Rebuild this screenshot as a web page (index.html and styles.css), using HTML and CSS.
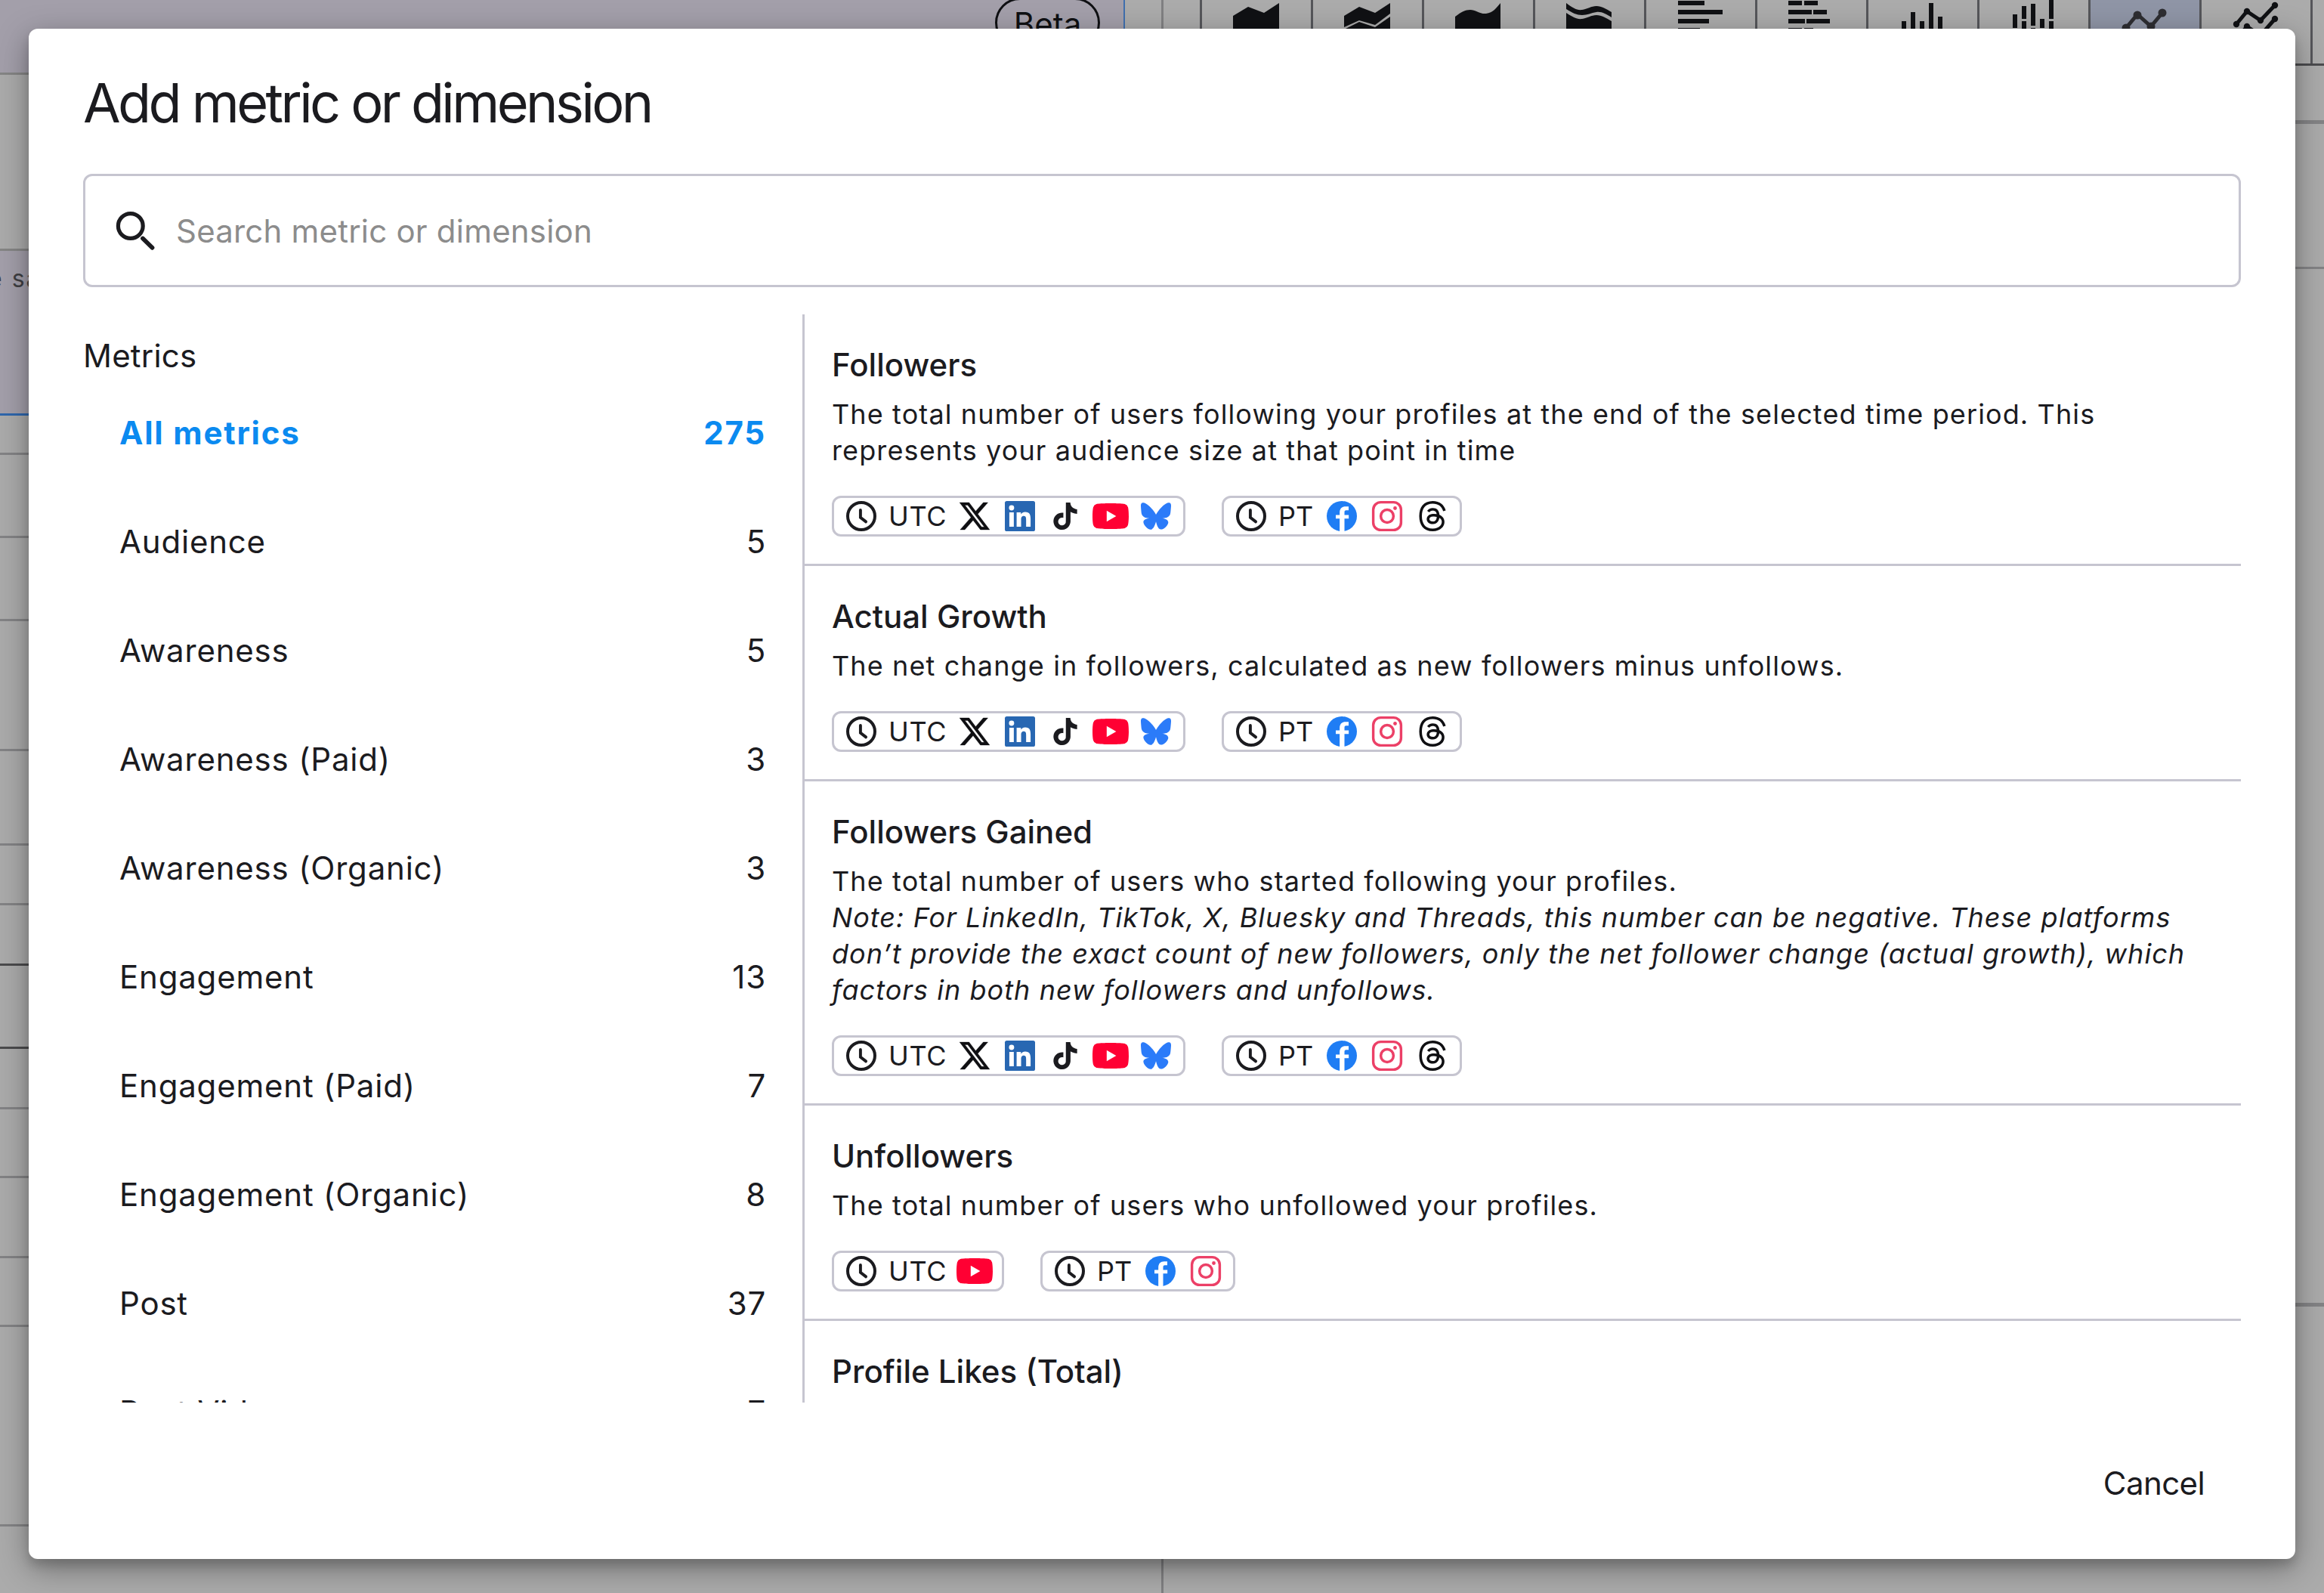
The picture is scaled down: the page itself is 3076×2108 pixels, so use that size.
FILE: index.html
```html
<!DOCTYPE html>
<html lang="en">
  <head>
    <meta charset="UTF-8" />
    <title>Add metric or dimension</title>
    <link rel="stylesheet" href="styles.css">
  </head>
  <body>
    <!-- Icon sprite -->
    <svg class="sprite" width="0" height="0">
      <symbol id="clock" viewBox="0 0 48 48">
        <circle cx="24" cy="24" r="18" fill="none" stroke="#1b1b1f" stroke-width="4" />
        <path d="M22.9 16v9.8l7.2 5.6" fill="none" stroke="#1b1b1f" stroke-width="3.9" stroke-linecap="round" />
      </symbol>
      <symbol id="x" viewBox="-2.45 -2.45 28.9 28.9">
        <path d="M18.901 1.153h3.68l-8.04 9.19L24 22.846h-7.406l-5.8-7.584-6.638 7.584H.474l8.6-9.83L0 1.154h7.594l5.243 6.932ZM17.61 20.644h2.039L6.486 3.24H4.298Z" fill="#0f0f12" stroke="#0f0f12" stroke-width="0.2" />
      </symbol>
      <symbol id="linkedin" viewBox="0 0 48 48">
        <rect x="4" y="4" width="40" height="40" rx="2.6" fill="#2867b2" />
        <path transform="translate(4 4) scale(1.6667)" d="M20.447 20.452h-3.554v-5.569c0-1.328-.027-3.037-1.852-3.037-1.853 0-2.136 1.445-2.136 2.939v5.667H9.351V9h3.414v1.561h.046c.477-.9 1.637-1.85 3.37-1.85 3.601 0 4.267 2.37 4.267 5.455v6.286zM5.337 7.433a2.062 2.062 0 0 1-2.063-2.065 2.064 2.064 0 1 1 2.063 2.065zm1.782 13.019H3.555V9h3.564v11.452z" fill="#fff" />
      </symbol>
      <symbol id="tiktok" viewBox="-4 -4 32 32">
        <path d="M12.525.02c1.31-.02 2.61-.01 3.91-.02.08 1.53.63 3.09 1.75 4.17 1.12 1.11 2.7 1.62 4.24 1.79v4.03c-1.44-.05-2.89-.35-4.2-.97-.57-.26-1.1-.59-1.62-.93-.01 2.92.01 5.84-.02 8.75-.08 1.4-.54 2.79-1.35 3.94-1.31 1.92-3.58 3.17-5.91 3.21-1.43.08-2.86-.31-4.08-1.03-2.02-1.19-3.44-3.37-3.65-5.71-.02-.5-.03-1-.01-1.49.18-1.9 1.12-3.72 2.58-4.96 1.66-1.44 3.98-2.13 6.15-1.72.02 1.48-.04 2.96-.04 4.44-.99-.32-2.15-.23-3.02.37-.63.41-1.11 1.04-1.36 1.75-.21.51-.15 1.07-.14 1.61.24 1.64 1.82 3.02 3.5 2.87 1.12-.01 2.19-.66 2.77-1.61.19-.33.4-.67.41-1.06.1-1.79.06-3.57.07-5.36.01-4.03-.01-8.05.02-12.07z" fill="#1b1b1f" />
      </symbol>
      <symbol id="youtube" viewBox="0 0 24 24">
        <path d="M23.498 6.186a3.016 3.016 0 0 0-2.122-2.136C19.505 3.545 12 3.545 12 3.545s-7.505 0-9.377.505A3.017 3.017 0 0 0 .502 6.186C0 8.07 0 12 0 12s0 3.93.502 5.814a3.016 3.016 0 0 0 2.122 2.136c1.871.505 9.376.505 9.376.505s7.505 0 9.377-.505a3.015 3.015 0 0 0 2.122-2.136C24 15.93 24 12 24 12s0-3.93-.502-5.814z" fill="#ff0033" />
        <path d="M9.4 8.4v7.2l6.3-3.6z" fill="#fff" />
      </symbol>
      <symbol id="bluesky" viewBox="0 0 48 48">
        <path transform="translate(4 4) scale(1.6667)" d="M12 10.8c-1.087-2.114-4.046-6.053-6.798-7.995C2.566.944 1.561 1.266.902 1.565.139 1.908 0 3.08 0 3.768c0 .69.378 5.65.624 6.479.815 2.736 3.713 3.66 6.383 3.364.136-.02.275-.039.415-.056-.138.022-.276.04-.415.056-3.912.58-7.387 2.005-2.83 7.078 5.013 5.19 6.87-1.113 7.823-4.308.953 3.195 2.05 9.271 7.733 4.308 4.267-4.308 1.172-6.498-2.74-7.078a8.741 8.741 0 0 1-.415-.056c.14.017.279.036.415.056 2.67.297 5.568-.628 6.383-3.364.246-.828.624-5.79.624-6.478 0-.69-.139-1.861-.902-2.206-.659-.298-1.664-.62-4.3 1.24C16.046 4.748 13.087 8.687 12 10.8Z" fill="#2b7bf9" />
      </symbol>
      <symbol id="facebook" viewBox="0 0 48 48">
        <circle cx="24" cy="24" r="20" fill="#1f7df4" />
        <path transform="translate(4 4) scale(1.6667)" d="M10.3 24.2V14H7.2v-2.9h3.1V9.3c0-3.2 1.7-4.9 4.6-4.9h2.5v3h-1.9c-1.1 0-1.4.6-1.4 1.6v2.1h3.4V14h-3.4v10.2z" fill="#fff" />
      </symbol>
      <symbol id="instagram" viewBox="0 0 48 48">
        <rect x="5.6" y="5.6" width="36.8" height="36.8" rx="10" fill="none" stroke="#ec4067" stroke-width="3.4" />
        <circle cx="24" cy="24" r="8.4" fill="none" stroke="#ec4067" stroke-width="3.5" />
        <circle cx="34.5" cy="13.5" r="2.4" fill="#ec4067" />
      </symbol>
      <symbol id="threads" viewBox="0 0 48 48">
        <path transform="translate(4 4) scale(1.6667)" d="M12.186 24h-.007c-3.581-.024-6.334-1.205-8.184-3.509C2.35 18.44 1.5 15.586 1.472 12.01v-.017c.03-3.579.879-6.43 2.525-8.482C5.845 1.205 8.6.024 12.18 0h.014c2.746.02 5.043.725 6.826 2.098 1.677 1.29 2.858 3.13 3.509 5.467l-2.04.569c-1.104-3.96-3.898-5.984-8.304-6.015-2.91.022-5.11.936-6.54 2.717C4.307 6.504 3.616 8.914 3.589 12c.027 3.086.718 5.496 2.057 7.164 1.43 1.783 3.631 2.698 6.54 2.717 2.623-.02 4.358-.631 5.8-2.045 1.647-1.613 1.618-3.593 1.09-4.798-.31-.71-.873-1.3-1.634-1.75-.192 1.352-.622 2.446-1.284 3.272-.886 1.102-2.14 1.704-3.73 1.79-1.202.065-2.361-.218-3.259-.801-1.063-.689-1.685-1.74-1.752-2.964-.065-1.19.408-2.285 1.33-3.082.88-.76 2.119-1.207 3.583-1.291a13.853 13.853 0 0 1 3.02.142c-.126-.742-.375-1.332-.75-1.757-.513-.586-1.308-.883-2.359-.89h-.029c-.844 0-1.992.232-2.721 1.32L7.734 7.847c.98-1.454 2.568-2.256 4.478-2.256h.044c3.194.02 5.097 1.975 5.287 5.388.108.046.216.094.321.142 1.49.7 2.58 1.761 3.154 3.07.797 1.82.871 4.79-1.548 7.158-1.85 1.81-4.094 2.628-7.277 2.65Zm1.003-11.69c-.242 0-.487.007-.739.021-1.836.103-2.98.946-2.916 2.143.067 1.256 1.452 1.839 2.784 1.767 1.224-.065 2.818-.543 3.086-3.71a10.5 10.5 0 0 0-2.215-.221z" fill="#0f0f12" />
      </symbol>
    </svg>

    <!-- Dashboard behind the dialog -->
    <div class="page">
      <div class="report">
        <div class="report-head"><span class="beta">Beta</span></div>
        <div class="report-gap"></div>
        <div class="report-note">e sa</div>
        <div class="report-rows">
          <div class="line h52"></div>
          <div class="line h110"></div>
          <div class="line h110"></div>
          <div class="line h172"></div>
          <div class="line h125"></div>
          <div class="line h79"></div>
          <div class="line h80 dark"></div>
          <div class="line h110 dark"></div>
          <div class="line h80"></div>
          <div class="line h91"></div>
          <div class="line h106"></div>
          <div class="line h91"></div>
          <div class="line h264"></div>
        </div>
      </div>
      <div class="gutter"></div>
      <div class="editor">
        <div class="chart-types">
          <div class="chart-type"><svg viewBox="1591 0 144 84"><path d="M1632 21l20-12 21 8 20-13v60h-61z" /></svg></div>
          <div class="chart-type"><svg viewBox="1738 0 144 84"><path d="M1779 21l20-12 21 8 20-13v14l-20 15-21-6-20 9zM1781 38l18-9 21 7 20-14v42h-59z" /></svg></div>
          <div class="chart-type"><svg viewBox="1885 0 144 84"><path d="M1926 22c8-6 13-9 20-9s13 6 21 5c9-1 14-8 19-14v60h-60z" /></svg></div>
          <div class="chart-type"><svg viewBox="2032 0 144 84"><path d="M2073 4c8 6 14 10 21 9s12-5 19-5 13 4 20 8v7c-7-4-13-8-20-7s-12 4-19 4-13-3-21-8zM2073 17c8 5 14 9 21 8s12-5 19-5 13 4 20 8v36h-60z" /></svg></div>
          <div class="chart-type"><svg viewBox="2179 0 144 84"><path d="M2221 1h35v6h-35zM2221 13h59v6h-59zM2221 25h41v6h-41zM2221 37h29v6h-29z" /></svg></div>
          <div class="chart-type"><svg viewBox="2326 0 144 84"><path d="M2367 1h18v6h-18zM2388 1h18v6h-18zM2367 13h31v6h-31zM2400 13h18v6h-18zM2367 25h22v6h-22zM2391 25h31v6h-31zM2367 37h18v6h-18zM2388 37h12v6h-12z" /></svg></div>
          <div class="chart-type"><svg viewBox="2473 0 144 84"><path d="M2517 28h6v20h-6zM2529 16h6v30h-6zM2541 28h6v20h-6zM2553 4h6v42h-6zM2565 22h6v24h-6z" /></svg></div>
          <div class="chart-type"><svg viewBox="2620 0 144 84"><path d="M2664 19h6v18h-6zM2676 8h6v17h-6zM2676 28h6v18h-6zM2688 5h6v29h-6zM2688 37h6v9h-6zM2700 25h6v12h-6zM2712 0h6v25h-6zM2712 28h6v18h-6z" /></svg></div>
          <div class="chart-type selected"><svg viewBox="2767 0 144 84"><path class="stroke" d="M2814 37l15-18 18 16 15-18" /><circle cx="2814" cy="37" r="5.5" /><circle cx="2829" cy="20" r="5.5" /><circle cx="2847" cy="35" r="5.5" /><circle cx="2862" cy="17" r="5.5" /></svg></div>
          <div class="chart-type"><svg viewBox="2914 0 144 84"><path class="stroke" d="M2960 32l14-17 18 12 19-20M2960 52l14-17 18 12 19-22" /><circle cx="2960" cy="32" r="4.2" /><circle cx="2974" cy="15" r="4.2" /><circle cx="2992" cy="27" r="4.2" /><circle cx="3011" cy="7" r="4.2" /><circle cx="2974" cy="35" r="4.2" /><circle cx="3011" cy="25" r="4.2" /></svg></div>
        </div>
        <div class="line thick h77"></div>
        <div class="line h192"></div>
        <div class="line thick h1373"></div>
      </div>
    </div>

    <!-- Dialog -->
    <div class="dialog">
      <h2>Add metric or dimension</h2>

      <div class="search">
        <svg class="search-icon" viewBox="0 0 72 72">
          <circle cx="28.8" cy="30" r="16.4" fill="none" stroke="#1b1b1f" stroke-width="5.2" />
          <path d="M45 46.5l12.5 12.3" stroke="#1b1b1f" stroke-width="5.8" stroke-linecap="round" />
        </svg>
        <span class="placeholder">Search metric or dimension</span>
      </div>

      <div class="content">
        <div class="categories">
          <div class="categories-title">Metrics</div>
          <div class="category active"><span>All metrics</span><span>275</span></div>
          <div class="category"><span>Audience</span><span>5</span></div>
          <div class="category"><span>Awareness</span><span>5</span></div>
          <div class="category"><span>Awareness (Paid)</span><span>3</span></div>
          <div class="category"><span>Awareness (Organic)</span><span>3</span></div>
          <div class="category"><span>Engagement</span><span>13</span></div>
          <div class="category"><span>Engagement (Paid)</span><span>7</span></div>
          <div class="category"><span>Engagement (Organic)</span><span>8</span></div>
          <div class="category"><span>Post</span><span>37</span></div>
          <div class="category"><span>Post Vide</span><span>7</span></div>
        </div>

        <div class="metrics">
          <div class="metric">
            <h3>Followers</h3>
            <p>The total number of users following your profiles at the end of the selected time period. This represents your audience size at that point in time</p>
            <div class="zones">
              <div class="zone">
                <svg><use href="#clock" /></svg><span class="utc">UTC</span><svg><use href="#x" /></svg><svg><use href="#linkedin" /></svg><svg><use href="#tiktok" /></svg><svg><use href="#youtube" /></svg><svg><use href="#bluesky" /></svg>
              </div>
              <div class="zone">
                <svg><use href="#clock" /></svg><span class="pt">PT</span><svg><use href="#facebook" /></svg><svg><use href="#instagram" /></svg><svg><use href="#threads" /></svg>
              </div>
            </div>
          </div>

          <div class="metric">
            <h3>Actual Growth</h3>
            <p>The net change in followers, calculated as new followers minus unfollows.</p>
            <div class="zones">
              <div class="zone">
                <svg><use href="#clock" /></svg><span class="utc">UTC</span><svg><use href="#x" /></svg><svg><use href="#linkedin" /></svg><svg><use href="#tiktok" /></svg><svg><use href="#youtube" /></svg><svg><use href="#bluesky" /></svg>
              </div>
              <div class="zone">
                <svg><use href="#clock" /></svg><span class="pt">PT</span><svg><use href="#facebook" /></svg><svg><use href="#instagram" /></svg><svg><use href="#threads" /></svg>
              </div>
            </div>
          </div>

          <div class="metric">
            <h3>Followers Gained</h3>
            <p>The total number of users who started following your profiles.<br /><em>Note: For LinkedIn, TikTok, X, Bluesky and Threads, this number can be negative. These platforms don’t provide the exact count of new followers, only the net follower change (actual growth), which factors in both new followers and unfollows.</em></p>
            <div class="zones">
              <div class="zone">
                <svg><use href="#clock" /></svg><span class="utc">UTC</span><svg><use href="#x" /></svg><svg><use href="#linkedin" /></svg><svg><use href="#tiktok" /></svg><svg><use href="#youtube" /></svg><svg><use href="#bluesky" /></svg>
              </div>
              <div class="zone">
                <svg><use href="#clock" /></svg><span class="pt">PT</span><svg><use href="#facebook" /></svg><svg><use href="#instagram" /></svg><svg><use href="#threads" /></svg>
              </div>
            </div>
          </div>

          <div class="metric">
            <h3>Unfollowers</h3>
            <p>The total number of users who unfollowed your profiles.</p>
            <div class="zones">
              <div class="zone">
                <svg><use href="#clock" /></svg><span class="utc">UTC</span><svg><use href="#youtube" /></svg>
              </div>
              <div class="zone">
                <svg><use href="#clock" /></svg><span class="pt">PT</span><svg><use href="#facebook" /></svg><svg><use href="#instagram" /></svg>
              </div>
            </div>
          </div>

          <div class="metric">
            <h3>Profile Likes (Total)</h3>
          </div>
        </div>
      </div>

      <div class="actions">
        <button>Cancel</button>
      </div>
    </div>
  </body>
</html>
```

FILE: styles.css
```css
* {
  box-sizing: border-box;
}

body {
  margin: 0;
  height: 2108px;
  overflow: hidden;
  position: relative;
  font-family: Inter, "Liberation Sans", sans-serif;
  font-size: 42px;
  line-height: 60px;
  color: #1b1b1f;
  background: #ababab;
}

.sprite {
  display: none;
}

/* dashboard behind the dialog */
.page {
  display: flex;
  height: 2108px;
}

.report {
  width: 1489px;
}

.report-head {
  display: flex;
  justify-content: flex-end;
  height: 99px;
  padding-right: 31px;
  background: #a39faa;
  border-right: 2px solid #3f6fae;
  border-bottom: 3px solid #858585;
}

.beta {
  width: 139px;
  height: 66px;
  margin-top: -3px;
  border: 3px solid #0f1013;
  border-radius: 33px;
  text-align: center;
  line-height: 63px;
  color: #0f1013;
}

.report-gap {
  height: 233px;
  border-bottom: 3px solid #858585;
}

.report-note {
  height: 218px;
  padding-top: 7px;
  margin-left: -16px;
  background: #a39faa;
  border-bottom: 3px solid #2f67ad;
  font-size: 32px;
  letter-spacing: 2px;
  color: #3f3f43;
}

.line {
  border-bottom: 3px solid #838385;
}

.line.dark {
  border-color: #4b4b4d;
}

.line.thick {
  border-bottom-width: 5px;
}

.h52 { height: 52px; }
.h77 { height: 77px; }
.h79 { height: 79px; }
.h80 { height: 80px; }
.h91 { height: 91px; }
.h106 { height: 106px; }
.h110 { height: 110px; }
.h125 { height: 125px; }
.h172 { height: 172px; }
.h192 { height: 192px; }
.h264 { height: 264px; }
.h1373 { height: 1373px; }

.gutter {
  width: 51px;
  border-right: 3px solid #808082;
}

.editor {
  flex: 1;
}

.chart-types {
  display: flex;
  height: 87px;
  padding-left: 48px;
  border-bottom: 3px solid #4b4b4e;
}

.chart-type {
  width: 147px;
  flex: none;
  border-left: 3px solid #55565a;
  fill: #101114;
}

.chart-type:last-child {
  width: 150px;
  border-right: 3px solid #55565a;
}

.chart-type svg {
  display: block;
  width: 144px;
  height: 84px;
}

.chart-type .stroke {
  fill: none;
  stroke: #101114;
  stroke-width: 5;
}

.chart-type.selected {
  background: #8f95a6;
  fill: #2e2e32;
}

.chart-type.selected .stroke {
  stroke: #2e2e32;
}

/* dialog */
.dialog {
  position: absolute;
  left: 38px;
  top: 38px;
  width: 3000px;
  height: 2025px;
  padding: 50px 72px 0;
  border-radius: 12px;
  background: #fff;
  box-shadow: 0 9px 12px rgba(0, 0, 0, 0.12), 0 12px 42px rgba(0, 0, 0, 0.36);
}

h2 {
  margin: 0 0 46px;
  font-size: 72px;
  line-height: 96px;
  font-weight: 400;
  letter-spacing: -3.6px;
}

.search {
  display: flex;
  align-items: center;
  height: 150px;
  padding-left: 31px;
  border: 3px solid #c6c5d0;
  border-radius: 12px;
}

.search-icon {
  width: 72px;
  height: 72px;
}

.placeholder {
  margin-left: 17px;
  padding-top: 2px;
  color: #8c8c8c;
  letter-spacing: 0.2px;
}

.content {
  display: flex;
  height: 1440px;
  margin-top: 36px;
  overflow: hidden;
}

.categories {
  width: 952px;
  padding-top: 25px;
}

.categories-title {
  letter-spacing: 0.2px;
}

.category {
  display: flex;
  justify-content: space-between;
  align-items: center;
  height: 144px;
  padding: 0 48px;
  letter-spacing: 0.8px;
}

.category.active {
  color: #0b8af0;
  font-weight: 700;
  letter-spacing: 1.8px;
}

.metrics {
  flex: 1;
  border-left: 3px solid #c6c5d0;
}

.metric {
  padding: 37px 36px 36px;
  border-bottom: 3px solid #c6c5d0;
}

h3 {
  margin: 0 0 11px;
  font-size: 42px;
  line-height: 60px;
  font-weight: 500;
  letter-spacing: 0;
}

.metric p {
  margin: 0 0 36px;
  font-size: 36px;
  line-height: 48px;
  letter-spacing: 1.12px;
}

.metric em {
  letter-spacing: 1.05px;
}

.zones {
  display: flex;
  gap: 48px;
}

.zone {
  display: flex;
  align-items: center;
  gap: 12px;
  height: 54px;
  padding: 0 12px;
  border: 3px solid #c6c5d0;
  border-radius: 12px;
  font-size: 36px;
  line-height: 48px;
}

.zone svg {
  width: 48px;
  height: 48px;
}

.zone .utc {
  width: 78px;
  letter-spacing: 0.7px;
}

.zone .pt {
  width: 48px;
}

.actions {
  display: flex;
  justify-content: flex-end;
  padding: 77px 48px 0;
}

.actions button {
  padding: 0;
  border: none;
  background: none;
  font: inherit;
  letter-spacing: -0.6px;
  color: inherit;
}
```
